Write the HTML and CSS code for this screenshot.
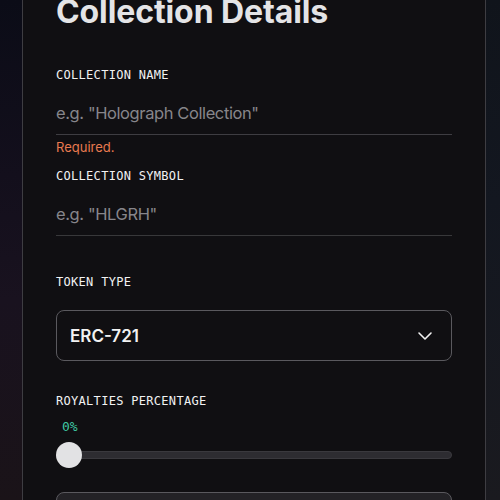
FILE: index.html
```html
<!DOCTYPE html>
<html lang="en">
<head>
    <meta charset="UTF-8">
    <meta name="viewport" content="width=device-width, initial-scale=1.0">
    <title>Collection Details</title>
    <link rel="stylesheet" href="styles.css">
</head>
<body>
    <div class="side side-left"></div>

    <main class="panel">
        <h1>Collection Details</h1>

        <div class="field">
            <label class="label" for="name">COLLECTION NAME</label>
            <input class="text-input" type="text" id="name" placeholder='e.g. "Holograph Collection"'>
            <div class="error">Required.</div>
        </div>

        <div class="field">
            <label class="label" for="symbol">COLLECTION SYMBOL</label>
            <input class="text-input light-line" type="text" id="symbol" placeholder='e.g. "HLGRH"'>
        </div>

        <div class="field field-type">
            <div class="label">TOKEN TYPE</div>
            <div class="select">
                <span>ERC-721</span>
                <svg width="16" height="10" viewBox="0 0 16 10">
                    <path d="M2 2 L8 8 L14 2" fill="none" stroke="#f2f2f2" stroke-width="1.6" stroke-linecap="round" stroke-linejoin="round"/>
                </svg>
            </div>
        </div>

        <div class="field field-royalty">
            <div class="label">ROYALTIES PERCENTAGE</div>
            <div class="percent">0%</div>
            <div class="slider">
                <div class="track"></div>
                <div class="thumb"></div>
            </div>
        </div>

        <div class="next-box"></div>
    </main>

    <div class="side side-right"></div>
</body>
</html>
```

FILE: styles.css
```css
* {
    margin: 0;
    padding: 0;
    box-sizing: border-box;
}

body {
    width: 500px;
    height: 500px;
    overflow: hidden;
    display: flex;
    background: #0f0e13;
    font-family: "Inter", "Liberation Sans", sans-serif;
}

.side {
    flex: none;
    height: 500px;
}

.side-left {
    width: 22px;
    background: linear-gradient(180deg, #0b0c17 0%, #130f1c 35%, #19121f 60%, #1a1318 100%);
}

.side-right {
    width: 14px;
    background: linear-gradient(180deg, #10141b 0%, #131720 40%, #1a1a1f 100%);
}

.panel {
    flex: none;
    width: 464px;
    height: 500px;
    background: #100f12;
    border-left: 1px solid #3e3d42;
    border-right: 1px solid #3e3d42;
    padding: 0 33px;
    overflow: hidden;
}

h1 {
    margin-top: -8px;
    font-size: 32px;
    line-height: 40px;
    font-weight: 700;
    color: #e4e4e6;
    letter-spacing: -0.1px;
}

.label {
    display: block;
    font-family: "DejaVu Sans Mono", "Liberation Mono", monospace;
    font-size: 12px;
    line-height: 16px;
    letter-spacing: 0.3px;
    color: #f2f2f2;
}

.field {
    margin-top: 35px;
}

.field + .field {
    margin-top: 13px;
}

.text-input {
    display: block;
    width: 100%;
    height: 44px;
    margin-top: 8px;
    border: none;
    border-bottom: 1px solid #3e3d42;
    background: transparent;
    font-family: "Inter", "Liberation Sans", sans-serif;
    font-size: 16.5px;
    letter-spacing: -0.4px;
    color: #fff;
    outline: none;
}

.text-input::placeholder {
    color: #87868b;
}

.light-line {
    border-bottom-color: #38383a;
}

.error {
    margin-top: 4px;
    font-size: 13px;
    line-height: 16px;
    color: #e97a50;
}

.field.field-type {
    margin-top: 38px;
}

.select {
    margin-top: 20px;
    height: 51px;
    border: 1px solid #5a595e;
    border-radius: 8px;
    display: flex;
    align-items: center;
    justify-content: space-between;
    padding: 0 18px 0 13px;
}

.select span {
    font-size: 17px;
    font-weight: 600;
    color: #f2f2f2;
}

.field.field-royalty {
    margin-top: 32px;
}

.percent {
    margin-top: 10px;
    padding-left: 6px;
    font-family: "DejaVu Sans Mono", "Liberation Mono", monospace;
    font-size: 13px;
    line-height: 16px;
    color: #3fc7a2;
}

.slider {
    position: relative;
    margin-top: 7px;
    height: 26px;
    display: flex;
    align-items: center;
}

.track {
    width: 100%;
    height: 8px;
    border-radius: 4px;
    background: #2d2c31;
    border: 1px solid #3a393e;
}

.thumb {
    position: absolute;
    left: 0;
    top: 0;
    width: 26px;
    height: 26px;
    border-radius: 50%;
    background: #e2e2e4;
}

.next-box {
    margin-top: 24px;
    height: 60px;
    border: 1px solid #5a595e;
    border-radius: 8px;
    background: #232226;
}
```
